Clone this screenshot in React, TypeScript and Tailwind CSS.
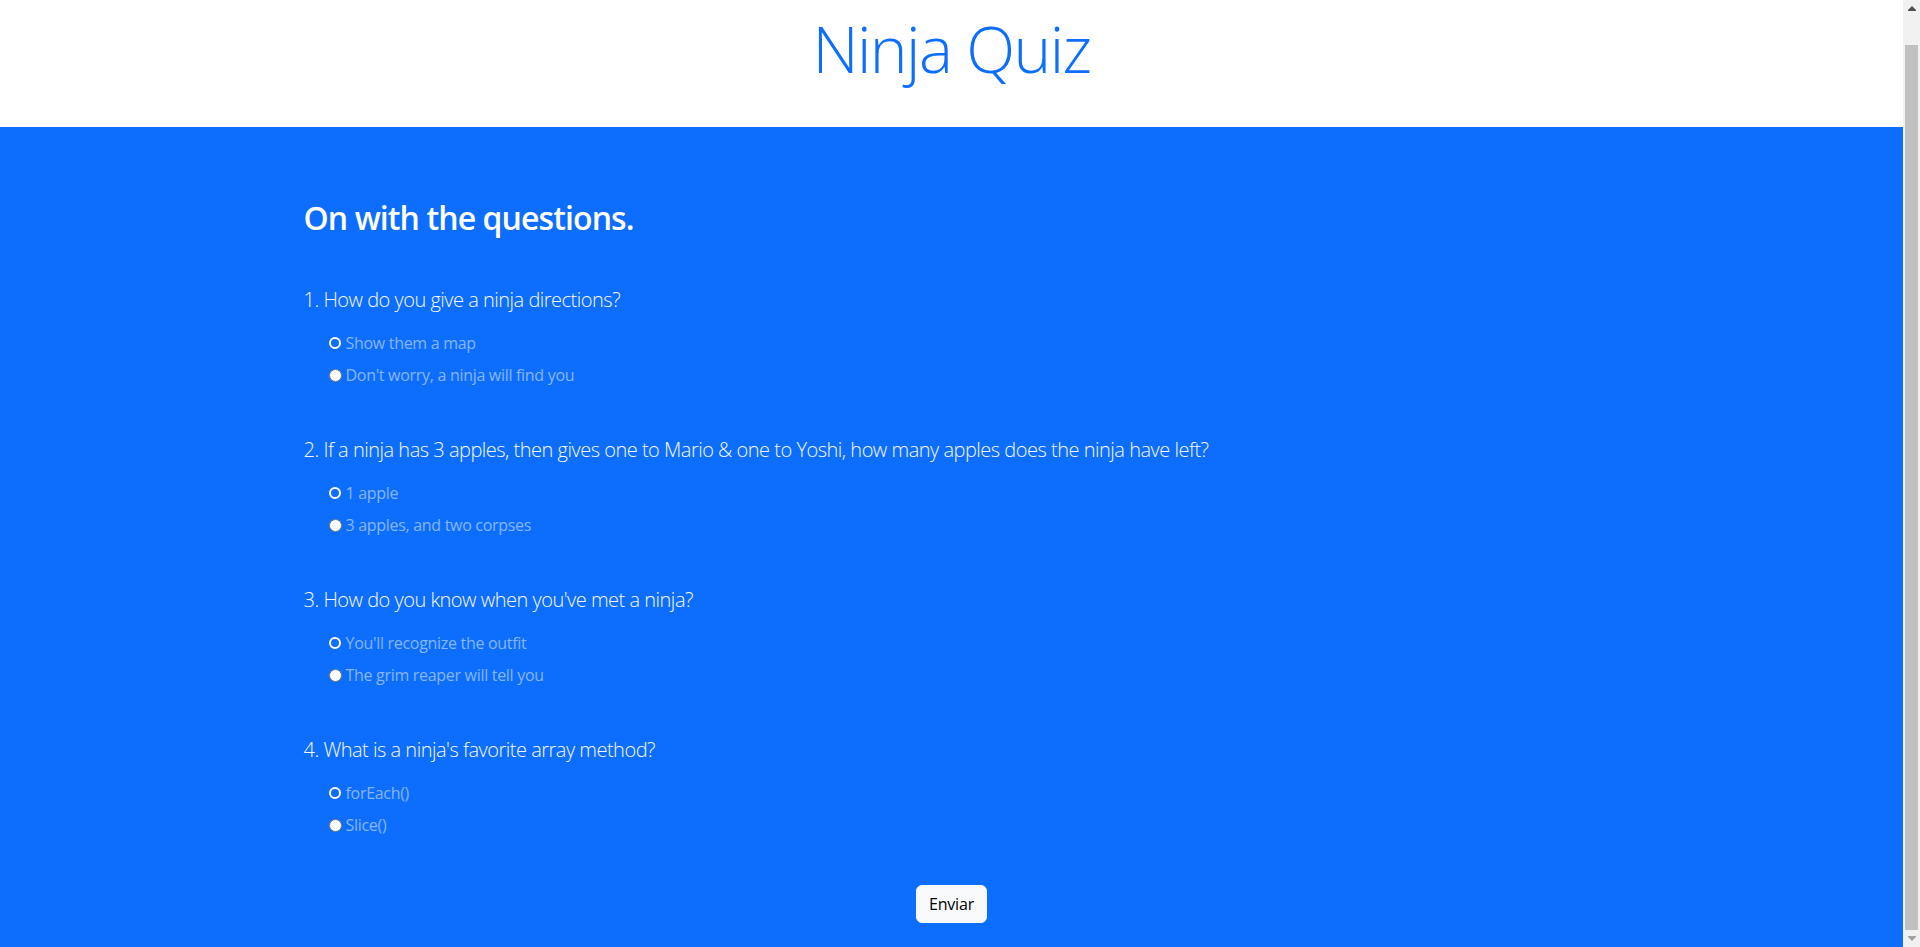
import React from 'react';

const questions = [
  {
    q: '1. How do you give a ninja directions?',
    options: ['Show them a map', "Don't worry, a ninja will find you"],
  },
  {
    q: '2. If a ninja has 3 apples, then gives one to Mario & one to Yoshi, how many apples does the ninja have left?',
    options: ['1 apple', '3 apples, and two corpses'],
  },
  {
    q: "3. How do you know when you've met a ninja?",
    options: ["You'll recognize the outfit", 'The grim reaper will tell you'],
  },
  {
    q: "4. What is a ninja's favorite array method?",
    options: ['forEach()', 'Slice()'],
  },
];

// browser scrollbar, page scrolled to the bottom
const Scrollbar: React.FC = () => (
  <div className="w-[17px] shrink-0 bg-[#f1f1f1] flex flex-col">
    <div className="h-[17px] flex items-center justify-center">
      <svg width="8" height="5" viewBox="0 0 8 5">
        <path d="M4 0 L8 4 L8 5 L0 5 L0 4 Z" fill="#505050" />
      </svg>
    </div>
    <div className="flex-1 flex flex-col px-[2px] pt-[28px]">
      <div className="flex-1 bg-[#c1c1c1]" />
    </div>
    <div className="h-[17px] flex items-center justify-center">
      <svg width="8" height="5" viewBox="0 0 8 5">
        <path d="M0 0 L8 0 L8 1 L4 5 L0 1 Z" fill="#a3a3a3" />
      </svg>
    </div>
  </div>
);

const App: React.FC = () => {
  return (
    <div className="flex h-screen overflow-hidden font-['Open_Sans',sans-serif]">
      <main className="flex-1 min-w-0">
        {/* Intro */}
        <div className="h-[127px] bg-white text-center pt-[11px]">
          <h1 className="text-[64px] font-light leading-[1.2] tracking-[-1.6px] text-[#0d6efd]">Ninja Quiz</h1>
        </div>

        {/* Quiz */}
        <div className="bg-[#0d6efd] pt-[24px] pb-6">
          <div className="max-w-[1320px] mx-auto px-3">
            <h2 className="mt-12 text-[32px] font-semibold leading-[1.2] tracking-[-0.9px] text-white">
              On with the questions.
            </h2>

            <form className="text-[#f8f9fa]">
              {questions.map((item, qi) => (
                <div key={qi} className="mt-12">
                  <p className="text-[20px] font-light leading-[30px] tracking-[-0.5px] mb-4">{item.q}</p>
                  {item.options.map((opt, oi) => (
                    <div
                      key={oi}
                      className="flex items-center h-6 mb-2 pl-[25px] text-[16px] tracking-[-0.3px] text-[#86b6fe]"
                    >
                      {oi === 0 ? (
                        <span className="w-[12px] h-[12px] rounded-full border-2 border-white shrink-0" />
                      ) : (
                        <span className="w-[13px] h-[13px] rounded-full bg-white border border-[#767676] shrink-0" />
                      )}
                      <label className={oi === 0 ? 'ml-[5px]' : 'ml-1'}>{opt}</label>
                    </div>
                  ))}
                </div>
              ))}

              <div className="text-center mt-12">
                <button
                  type="submit"
                  className="h-[38px] px-3 rounded-md bg-[#f8f9fa] text-[16px] tracking-[-0.2px] text-black border border-[#f8f9fa]"
                >
                  Enviar
                </button>
              </div>
            </form>
          </div>
        </div>
      </main>
      <Scrollbar />
    </div>
  );
};

export default App;
